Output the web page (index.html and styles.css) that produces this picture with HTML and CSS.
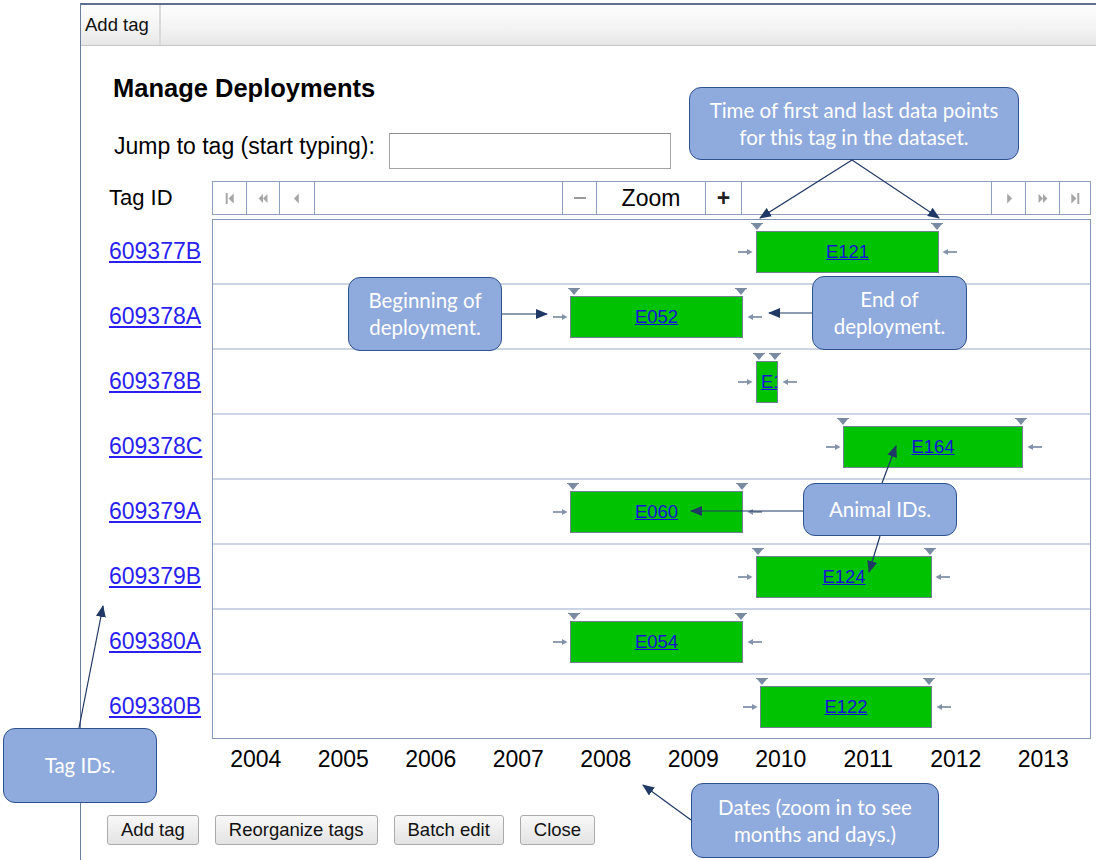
FILE: index.html
```html
<!DOCTYPE html>
<html lang="en">
<head>
<meta charset="utf-8">
<title>Manage Deployments</title>
<link rel="stylesheet" href="styles.css">
</head>
<body>
<div class="page">
  <div class="window">
    <div class="toolbar"><span class="tb-btn">Add tag</span></div>
    <div class="content">
      <h1 class="title">Manage Deployments</h1>
      <div class="jump">
        <label class="jump-label" for="jump">Jump to tag (start typing):</label>
        <input id="jump" class="jump-input" type="text">
      </div>

      <div class="timeline">
        <div class="tagid-head">Tag ID</div>
        <div class="nav">
          <span class="nav-cell w34"><svg class="ico" viewBox="0 0 8 9"><rect x="0.5" y="0" width="1.6" height="9"/><path d="M7 0.5V8.5L2.8 4.5z"/></svg></span>
          <span class="nav-cell w33"><svg class="ico" viewBox="0 0 9 9"><path d="M4.5 0.5V8.5L0.5 4.5z"/><path d="M8.5 0.5V8.5L4.5 4.5z"/></svg></span>
          <span class="nav-cell w35"><svg class="ico" viewBox="0 0 8 9"><path d="M5.5 0.5V8.5L1.5 4.5z"/></svg></span>
          <span class="nav-cell w248"></span>
          <span class="nav-cell w34"><span class="minus"></span></span>
          <span class="nav-cell w109 zoom">Zoom</span>
          <span class="nav-cell w36 plus">+</span>
          <span class="nav-cell w250"></span>
          <span class="nav-cell w34"><svg class="ico" viewBox="0 0 8 9"><path d="M2.5 0.5V8.5L6.5 4.5z"/></svg></span>
          <span class="nav-cell w34"><svg class="ico" viewBox="0 0 9 9"><path d="M0.5 0.5V8.5L4.5 4.5z"/><path d="M4.5 0.5V8.5L8.5 4.5z"/></svg></span>
          <span class="nav-cell last"><svg class="ico" viewBox="0 0 8 9"><path d="M1 0.5V8.5L5.2 4.5z"/><rect x="5.9" y="0" width="1.6" height="9"/></svg></span>
        </div>

        <div class="tags">
          <div class="tag-cell"><a href="#">609377B</a></div>
          <div class="tag-cell"><a href="#">609378A</a></div>
          <div class="tag-cell"><a href="#">609378B</a></div>
          <div class="tag-cell"><a href="#">609378C</a></div>
          <div class="tag-cell"><a href="#">609379A</a></div>
          <div class="tag-cell"><a href="#">609379B</a></div>
          <div class="tag-cell"><a href="#">609380A</a></div>
          <div class="tag-cell"><a href="#">609380B</a></div>
        </div>

        <div class="chart">
          <div class="row">
            <span class="tri" style="left:539px"></span><span class="tri" style="left:719px"></span>
            <svg class="garr" style="left:525px" viewBox="0 0 15 8"><path d="M0 4H11"/><path class="hd" d="M9 1L14.5 4L9 7z"/></svg>
            <div class="bar" style="left:543px;width:183px"><a href="#">E121</a></div>
            <svg class="garr" style="left:729px" viewBox="0 0 15 8"><path d="M4 4H15"/><path class="hd" d="M6 1L0.5 4L6 7z"/></svg>
          </div>
          <div class="row">
            <span class="tri" style="left:356px"></span><span class="tri" style="left:523px"></span>
            <svg class="garr" style="left:340px" viewBox="0 0 15 8"><path d="M0 4H11"/><path class="hd" d="M9 1L14.5 4L9 7z"/></svg>
            <div class="bar" style="left:357px;width:173px"><a href="#">E052</a></div>
            <svg class="garr" style="left:534px" viewBox="0 0 15 8"><path d="M4 4H15"/><path class="hd" d="M6 1L0.5 4L6 7z"/></svg>
          </div>
          <div class="row">
            <span class="tri" style="left:541px"></span><span class="tri" style="left:557px"></span>
            <svg class="garr" style="left:525px" viewBox="0 0 15 8"><path d="M0 4H11"/><path class="hd" d="M9 1L14.5 4L9 7z"/></svg>
            <div class="bar narrow" style="left:543px;width:22px"><a href="#">E123</a></div>
            <svg class="garr" style="left:569px" viewBox="0 0 15 8"><path d="M4 4H15"/><path class="hd" d="M6 1L0.5 4L6 7z"/></svg>
          </div>
          <div class="row">
            <span class="tri" style="left:625px"></span><span class="tri" style="left:803px"></span>
            <svg class="garr" style="left:613px" viewBox="0 0 15 8"><path d="M0 4H11"/><path class="hd" d="M9 1L14.5 4L9 7z"/></svg>
            <div class="bar" style="left:630px;width:180px"><a href="#">E164</a></div>
            <svg class="garr" style="left:814px" viewBox="0 0 15 8"><path d="M4 4H15"/><path class="hd" d="M6 1L0.5 4L6 7z"/></svg>
          </div>
          <div class="row">
            <span class="tri" style="left:355px"></span><span class="tri" style="left:524px"></span>
            <svg class="garr" style="left:340px" viewBox="0 0 15 8"><path d="M0 4H11"/><path class="hd" d="M9 1L14.5 4L9 7z"/></svg>
            <div class="bar" style="left:357px;width:173px"><a href="#">E060</a></div>
            <svg class="garr" style="left:534px" viewBox="0 0 15 8"><path d="M4 4H15"/><path class="hd" d="M6 1L0.5 4L6 7z"/></svg>
          </div>
          <div class="row">
            <span class="tri" style="left:540px"></span><span class="tri" style="left:712px"></span>
            <svg class="garr" style="left:525px" viewBox="0 0 15 8"><path d="M0 4H11"/><path class="hd" d="M9 1L14.5 4L9 7z"/></svg>
            <div class="bar" style="left:543px;width:176px"><a href="#">E124</a></div>
            <svg class="garr" style="left:722px" viewBox="0 0 15 8"><path d="M4 4H15"/><path class="hd" d="M6 1L0.5 4L6 7z"/></svg>
          </div>
          <div class="row">
            <span class="tri" style="left:356px"></span><span class="tri" style="left:523px"></span>
            <svg class="garr" style="left:340px" viewBox="0 0 15 8"><path d="M0 4H11"/><path class="hd" d="M9 1L14.5 4L9 7z"/></svg>
            <div class="bar" style="left:357px;width:173px"><a href="#">E054</a></div>
            <svg class="garr" style="left:534px" viewBox="0 0 15 8"><path d="M4 4H15"/><path class="hd" d="M6 1L0.5 4L6 7z"/></svg>
          </div>
          <div class="row">
            <span class="tri" style="left:544px"></span><span class="tri" style="left:711px"></span>
            <svg class="garr" style="left:530px" viewBox="0 0 15 8"><path d="M0 4H11"/><path class="hd" d="M9 1L14.5 4L9 7z"/></svg>
            <div class="bar" style="left:547px;width:172px"><a href="#">E122</a></div>
            <svg class="garr" style="left:723px" viewBox="0 0 15 8"><path d="M4 4H15"/><path class="hd" d="M6 1L0.5 4L6 7z"/></svg>
          </div>
        </div>

        <div class="spacer"></div>
        <div class="years">
          <span>2004</span><span>2005</span><span>2006</span><span>2007</span><span>2008</span>
          <span>2009</span><span>2010</span><span>2011</span><span>2012</span><span>2013</span>
        </div>
      </div>

      <div class="buttons">
        <button class="btn" type="button">Add tag</button>
        <button class="btn" type="button">Reorganize tags</button>
        <button class="btn" type="button">Batch edit</button>
        <button class="btn" type="button">Close</button>
      </div>
    </div>
  </div>

  <div class="callout c-time">Time of first and last data points<br>for this tag in the dataset.</div>
  <div class="callout c-begin">Beginning of<br>deployment.</div>
  <div class="callout c-end">End of<br>deployment.</div>
  <div class="callout c-animal">Animal IDs.</div>
  <div class="callout c-tag">Tag IDs.</div>
  <div class="callout c-dates">Dates (zoom in to see<br>months and days.)</div>

  <svg class="arrows" viewBox="0 0 1096 860">
    <defs>
      <marker id="ah" viewBox="0 0 12 10" refX="11" refY="5" markerWidth="12" markerHeight="10" markerUnits="userSpaceOnUse" orient="auto">
        <path d="M0 0L12 5L0 10z" class="ahead"/>
      </marker>
    </defs>
    <line x1="852" y1="160" x2="760" y2="218" marker-end="url(#ah)"/>
    <line x1="852" y1="160" x2="939" y2="218" marker-end="url(#ah)"/>
    <line x1="502" y1="314" x2="547" y2="314" marker-end="url(#ah)"/>
    <line x1="812" y1="313" x2="769" y2="313" marker-end="url(#ah)"/>
    <line x1="803" y1="511" x2="691" y2="511" marker-end="url(#ah)"/>
    <line x1="882" y1="483" x2="896" y2="446" marker-end="url(#ah)"/>
    <line x1="880" y1="536" x2="869" y2="572" marker-end="url(#ah)"/>
    <line x1="79" y1="728" x2="103" y2="606" marker-end="url(#ah)"/>
    <line x1="691" y1="820" x2="643" y2="785" marker-end="url(#ah)"/>
  </svg>
</div>
</body>
</html>
```

FILE: styles.css
```css
html, body {
  margin: 0;
  padding: 0;
  background: #ffffff;
  overflow: hidden;
}

body {
  font-family: "Liberation Sans", Arial, sans-serif;
  color: #000;
}

.page {
  position: relative;
  width: 1096px;
  height: 860px;
  overflow: hidden;
}

.window {
  margin-left: 80px;
  margin-top: 3px;
  height: 857px;
  border-left: 1px solid #6c7e9b;
  border-top: 2px solid #5c6f8f;
  box-sizing: border-box;
}

.toolbar {
  height: 41px;
  box-sizing: border-box;
  border-bottom: 1px solid #c6c6c6;
  background: linear-gradient(#fdfdfd, #f3f3f3 60%, #e6e6e6);
  display: flex;
  align-items: stretch;
}

.tb-btn {
  display: flex;
  align-items: center;
  padding: 0 10px 0 4px;
  font-size: 18.5px;
  color: #111;
  border-right: 2px solid #d9d9d9;
}

.content {
  padding: 27px 0 0 28px;
}

.title {
  margin: 0 0 0 4px;
  font-size: 25.5px;
  line-height: 30px;
  font-weight: bold;
}

.jump {
  display: flex;
  align-items: center;
  margin: 30px 0 0 5px;
  height: 36px;
}

.jump-label {
  font-size: 23px;
  line-height: 30px;
  margin-top: -10px;
}

.jump-input {
  margin-left: 14px;
  width: 282px;
  height: 36px;
  box-sizing: border-box;
  border: 1px solid #a4a4a4;
  border-top-color: #8e8e8e;
  padding: 0 4px;
  font: inherit;
  background: #fff;
}

.timeline {
  margin-top: 12px;
  display: grid;
  grid-template-columns: 103px 879px;
  row-gap: 4px;
}

.tagid-head {
  font-size: 22px;
  display: flex;
  align-items: center;
  height: 34px;
}

.nav {
  display: flex;
  height: 34px;
  box-sizing: border-box;
  border: 1px solid #8d9fba;
  border-right: none;
}

.nav-cell {
  box-sizing: border-box;
  border-right: 1px solid #8d9fba;
  display: flex;
  align-items: center;
  justify-content: center;
  flex: none;
}

.w33 { width: 33px; }
.w34 { width: 34px; }
.w35 { width: 35px; }
.w36 { width: 36px; }
.w109 { width: 109px; }
.w248 { width: 248px; }
.w250 { width: 250px; }
.nav-cell.last { flex: 1; }

.ico {
  width: 10px;
  height: 11px;
  fill: #a6a6a6;
}

.minus {
  display: block;
  width: 12px;
  height: 1.5px;
  background: #9a9a9a;
}

.zoom {
  font-size: 23px;
}

.plus {
  font-size: 23px;
  font-weight: bold;
  color: #222;
}

.tags {
  display: flex;
  flex-direction: column;
}

.tag-cell {
  height: 65px;
  display: flex;
  align-items: center;
  font-size: 23px;
}

.tag-cell a {
  color: #2a1ff0;
  text-decoration: underline;
}

.chart {
  border: 1px solid #8396b3;
  display: flex;
  flex-direction: column;
}

.row {
  position: relative;
  height: 63px;
}

.row + .row {
  border-top: 2px solid #cbd5e3;
}

.bar {
  position: absolute;
  top: 11px;
  height: 42px;
  box-sizing: border-box;
  background: #00c200;
  border: 1px solid #6f8090;
  display: flex;
  align-items: center;
  justify-content: center;
  font-size: 18.5px;
  overflow: hidden;
  white-space: nowrap;
}

.bar a {
  color: #1414d8;
  text-decoration: underline;
}

.bar.narrow {
  justify-content: flex-start;
  padding-left: 4px;
}

.tri {
  position: absolute;
  top: 4px;
  width: 0;
  height: 0;
  border-left: 5px solid transparent;
  border-right: 5px solid transparent;
  border-top: 6px solid #7a8aa1;
}

.tri::before {
  content: "";
  position: absolute;
  left: -6px;
  top: -7px;
  width: 12px;
  height: 1px;
  background: #7a8aa1;
}

.garr {
  position: absolute;
  top: 28px;
  width: 15px;
  height: 8px;
  stroke: #8393a9;
  stroke-width: 1.8;
  fill: none;
}

.garr .hd {
  fill: #8393a9;
  stroke: none;
}

.years {
  display: grid;
  grid-template-columns: repeat(10, 1fr);
  font-size: 23px;
  line-height: 32px;
  text-align: center;
  padding-right: 4px;
}

.buttons {
  margin: 40px 0 0 -2px;
  display: flex;
  gap: 16px;
}

.btn {
  height: 30px;
  padding: 0 13px;
  font-family: "Liberation Sans", Arial, sans-serif;
  font-size: 18.5px;
  color: #111;
  background: linear-gradient(#f8f8f8, #e3e3e3);
  border: 1px solid #ababab;
  border-radius: 3px;
}

.callout {
  position: absolute;
  box-sizing: border-box;
  background: #8faadc;
  border: 1.5px solid #2f528f;
  border-radius: 12px;
  color: #ffffff;
  font-family: Lato, "Open Sans", sans-serif;
  font-size: 20.5px;
  line-height: 27px;
  text-align: center;
  display: flex;
  align-items: center;
  justify-content: center;
}

.c-time { left: 689px; top: 87px; width: 330px; height: 73px; }
.c-begin { left: 348px; top: 277px; width: 154px; height: 74px; }
.c-end { left: 812px; top: 276px; width: 155px; height: 74px; }
.c-animal { left: 803px; top: 483px; width: 154px; height: 53px; }
.c-tag { left: 3px; top: 728px; width: 154px; height: 75px; }
.c-dates { left: 691px; top: 783px; width: 248px; height: 75px; }

.arrows {
  position: absolute;
  left: 0;
  top: 0;
  width: 1096px;
  height: 860px;
  pointer-events: none;
  stroke: #1f3864;
  stroke-width: 1.2;
}

.arrows .ahead {
  fill: #1f3864;
  stroke: none;
}
```
